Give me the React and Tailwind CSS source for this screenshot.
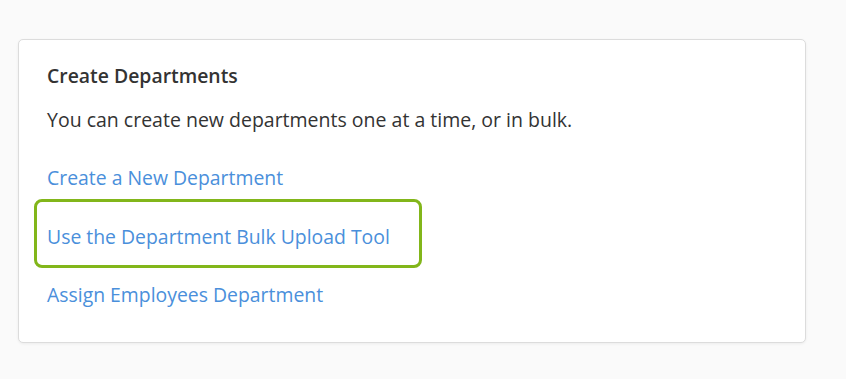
import React from 'react';

const links = [
  { label: 'Create a New Department' },
  { label: 'Use the Department Bulk Upload Tool', highlight: true },
  { label: 'Assign Employees Department' },
];

const App = () => {
  return (
    <div className="min-h-screen w-full bg-[#fafafa] pt-[39px] pl-[18px] font-['Open_Sans',sans-serif]">
      <div className="w-[788px] h-[304px] rounded-[5px] border border-[#dcdcdc] bg-white shadow-[0_1px_3px_rgba(0,0,0,0.06)] pl-[28px] pt-[23px]">
        <h2 className="text-[19.4px] leading-[26px] font-semibold text-[#333]">Create Departments</h2>
        <p className="mt-[17px] text-[19.5px] leading-[28px] text-[#333]">
          You can create new departments one at a time, or in bulk.
        </p>
        <div className="mt-[30px] flex flex-col items-start gap-[30.5px]">
          {links.map((link) => (
            <div key={link.label} className="relative">
              <a href="#" className="block text-[19.4px] leading-[28px] text-[#4a8fdb]">
                {link.label}
              </a>
              {link.highlight && (
                <div className="absolute -left-[13px] -right-[32px] -top-[24px] -bottom-[17px] rounded-[8px] border-[3px] border-[#82b61a] pointer-events-none" />
              )}
            </div>
          ))}
        </div>
      </div>
    </div>
  );
};

export default App;
